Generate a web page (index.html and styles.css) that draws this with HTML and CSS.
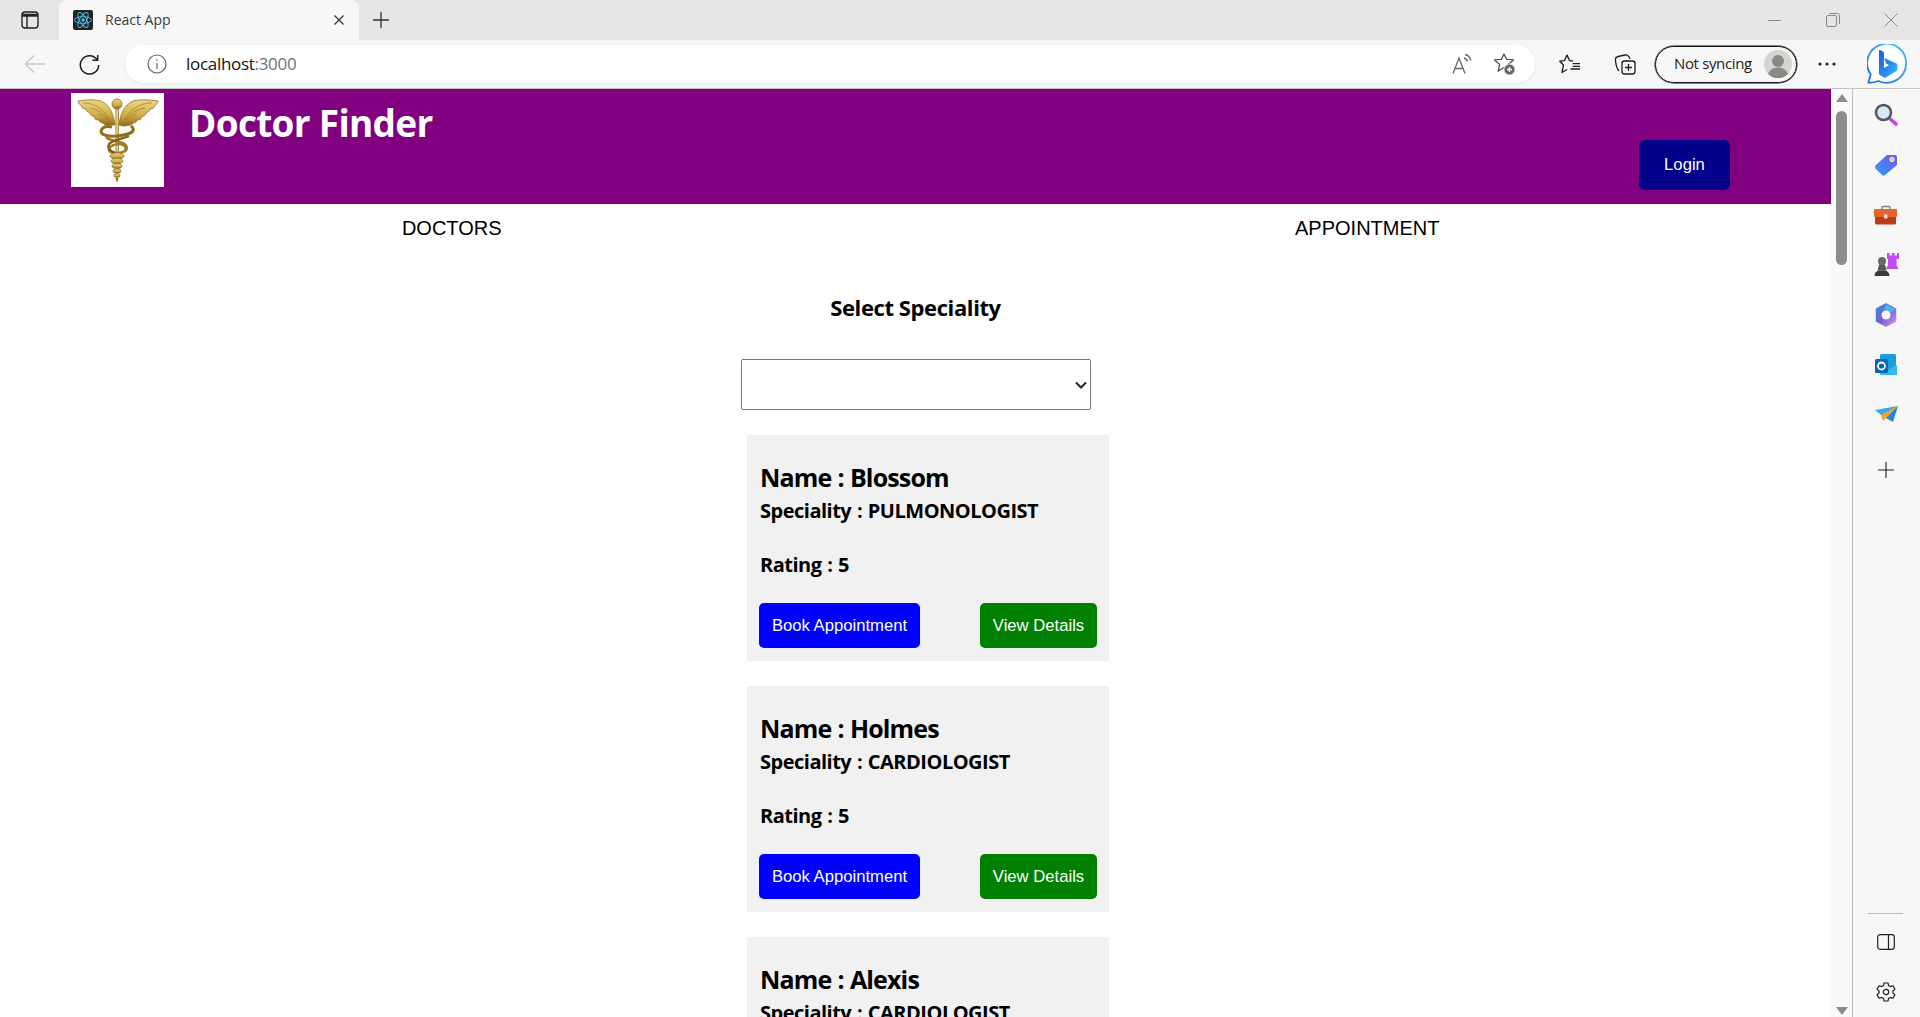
FILE: index.html
```html
<!DOCTYPE html>
<html lang="en">
<head>
  <meta charset="UTF-8">
  <meta name="viewport" content="width=device-width, initial-scale=1.0">
  <title>React App</title>
  <link rel="stylesheet" href="styles.css">
</head>
<body>
  <div class="browser">

    <!-- Tab strip -->
    <div class="tabstrip">
      <div class="strip-btn first">
        <svg width="18" height="18" viewBox="0 0 18 18" fill="none" stroke="#222" stroke-width="1.4"><rect x="1" y="1" width="16" height="16" rx="3"/><path d="M1.5 4.2h15" stroke-width="3"/><path d="M6 5v12"/></svg>
      </div>
      <div class="tab">
        <svg class="tab-icon" width="20" height="20" viewBox="0 0 20 20" fill="none" stroke="#53c1de" stroke-width=".9"><rect width="20" height="20" rx="2" fill="#20232a" stroke="none"/><circle cx="10" cy="10" r="1.7" fill="#53c1de" stroke="none"/><ellipse cx="10" cy="10" rx="8.5" ry="3.4"/><ellipse cx="10" cy="10" rx="8.5" ry="3.4" transform="rotate(60 10 10)"/><ellipse cx="10" cy="10" rx="8.5" ry="3.4" transform="rotate(120 10 10)"/></svg>
        <span class="tab-title">React App</span>
        <svg class="tab-close" width="12" height="12" viewBox="0 0 12 12" stroke="#333" stroke-width="1.2"><path d="M1.5 1.5l9 9M10.5 1.5l-9 9"/></svg>
      </div>
      <div class="strip-btn new-tab">
        <svg width="18" height="18" viewBox="0 0 18 18" stroke="#333" stroke-width="1.3"><path d="M9 1v16M1 9h16"/></svg>
      </div>
      <div class="window-controls">
        <div class="win-btn"><svg width="14" height="14" viewBox="0 0 14 14" stroke="#8a8a8a"><path d="M0 7.5h13"/></svg></div>
        <div class="win-btn"><svg width="14" height="14" viewBox="0 0 14 14" fill="none" stroke="#8a8a8a"><rect x=".5" y="2.5" width="10" height="11" rx="1.5"/><path d="M3 .5h8.5a2 2 0 0 1 2 2V11"/></svg></div>
        <div class="win-btn"><svg width="14" height="14" viewBox="0 0 14 14" stroke="#8a8a8a"><path d="M.5.5l13 13M13.5.5l-13 13"/></svg></div>
      </div>
    </div>

    <!-- Toolbar -->
    <div class="toolbar">
      <div class="tool-btn">
        <svg width="22" height="20" viewBox="0 0 22 20" fill="none" stroke="#c9c9c9" stroke-width="1.4"><path d="M21 10H1.5M10 1.5L1.5 10l8.5 8.5"/></svg>
      </div>
      <div class="tool-btn">
        <svg width="21" height="21" viewBox="0 0 21 21" fill="none" stroke="#1c1c1c" stroke-width="1.5"><path d="M18 5.5A9.2 9.2 0 1 0 19.7 11"/><path d="M18.7 1v5.2h-5.2"/></svg>
      </div>
      <div class="addressbar">
        <svg class="info-icon" width="20" height="20" viewBox="0 0 20 20" fill="none" stroke="#666" stroke-width="1.2"><circle cx="10" cy="10" r="9"/><path d="M10 9v6M10 5.2v1.6"/></svg>
        <span class="url">localhost<span class="url-port">:3000</span></span>
        <div class="address-actions">
          <svg width="22" height="22" viewBox="0 0 22 22" fill="none" stroke="#666" stroke-width="1.3"><path d="M2 20.500L8 5l6 15.500M4 15.500h8"/><path d="M13 5c1.800.3 3 1.500 3.500 3.500M14 1.500c3 .6 5 2.500 5.800 6"/></svg>
          <svg width="24" height="24" viewBox="0 0 24 24" fill="none" stroke="#555" stroke-width="1.300" stroke-linejoin="round"><path d="M12 2l2.600 5.400 6.900.5-5.200 4.500 1.600 6.700L12 15.500l-5.900 3.600 1.600-6.700-5.200-4.500 6.900-.5z"/><circle cx="17.500" cy="17.500" r="5.500" fill="#666" stroke="#fff" stroke-width=".8"/><path d="M17.500 15v5M15 17.500h5" stroke="#fff" stroke-width="1.400"/></svg>
        </div>
      </div>
      <div class="tool-btn toolbar-gap">
        <svg width="22" height="20" viewBox="0 0 22 20" fill="none" stroke="#1c1c1c" stroke-width="1.300" stroke-linejoin="round"><path d="M14 7l-3.500-.4L8 1 5.500 6.600.8 7.200l3.700 3.800L3 18.500l5-3"/><path d="M13.700 9.700H21M13.700 12.400H21M11.500 15H21"/></svg>
      </div>
      <div class="tool-btn">
        <svg width="22" height="22" viewBox="0 0 22 22" fill="none" stroke="#1c1c1c" stroke-width="1.300"><rect x="8" y="8" width="13" height="13" rx="2.500"/><path d="M14.500 11v7M11 14.500h7"/><path d="M5 18C3 16 2 12 1.500 8 1 5 2 4 4 3.500L11 2c3-.5 4 1 5 4"/></svg>
      </div>
      <div class="sync-pill">
        <span class="sync-text">Not syncing</span>
        <svg width="28" height="28" viewBox="0 0 28 28"><circle cx="14" cy="14" r="14" fill="#d6d4d0"/><circle cx="14" cy="11" r="6" fill="#8b8985"/><path d="M4 24c2-5 6-6.500 10-6.500S22 19 24 24a14 14 0 0 1-20 0z" fill="#8b8985"/></svg>
      </div>
      <div class="tool-btn more-btn">
        <svg width="18" height="4" viewBox="0 0 18 4" fill="#222"><circle cx="2" cy="2" r="1.600"/><circle cx="9" cy="2" r="1.600"/><circle cx="16" cy="2" r="1.600"/></svg>
      </div>
      <div class="bing-btn">
        <svg width="42" height="40" viewBox="0 0 42 40" fill="none">
          <defs>
            <linearGradient id="bingB" x1="0" y1="0" x2="1" y2="1"><stop offset="0" stop-color="#1a5fe0"/><stop offset=".6" stop-color="#2a8df0"/><stop offset="1" stop-color="#37c6ea"/></linearGradient>
            <linearGradient id="bingRing" x1="0" y1="1" x2="1" y2="0"><stop offset="0" stop-color="#1a6fe8"/><stop offset="1" stop-color="#3ac0f5"/></linearGradient>
          </defs>
          <path d="M1.500 38.500l2.200-8A19.500 19.500 0 1 1 11.500 37c-3 1-7 2-10 1.500z" stroke="url(#bingRing)" stroke-width="1.800" fill="#fff"/>
          <path d="M12 6c2 0 4 1 5 2.500v15.500l5-2.800-3-1.700-1.700-5.500 13 6v6.500L18 34l-6-3.500z" fill="url(#bingB)"/>
        </svg>
      </div>
    </div>

    <div class="viewport">
      <!-- The page -->
      <div class="page">
        <header class="site-header">
          <div class="logo">
            <svg width="93" height="94" viewBox="0 0 93 94">
              <defs>
                <linearGradient id="gold" x1="0" y1="0" x2="0" y2="1"><stop offset="0" stop-color="#ecd886"/><stop offset=".6" stop-color="#d2ac48"/><stop offset="1" stop-color="#8a6a1c"/></linearGradient>
                <linearGradient id="goldStaff" x1="0" y1="0" x2="1" y2="0"><stop offset="0" stop-color="#a07c24"/><stop offset=".5" stop-color="#f1e29a"/><stop offset="1" stop-color="#8a6a1c"/></linearGradient>
              </defs>
              <!-- wings -->
              <path d="M44 32c-1-10-5-20-14-24C22 6 14 7 7 8c0 2 2 4 4 5-1 1 1 3 4 3 0 2 2 3 4 4 0 2 2 3 5 4-1 2 1 3 4 3 0 2 2 3 4 3 1 2 4 3 8 2z" fill="url(#gold)" stroke="#94741f" stroke-width=".8"/>
              <path d="M48 32c1-10 5-20 14-24 8-2 17-1 25 0 0 2-2 4-4 5 1 1-1 3-4 3 0 2-2 3-4 4 0 2-2 3-5 4 1 2-1 3-4 3 0 2-2 3-4 3-1 2-4 3-10 3z" fill="url(#gold)" stroke="#94741f" stroke-width=".8"/>
              <path d="M12 10c10 0 20 4 27 18M19 15c8 1 15 6 20 14M27 21c5 1 9 5 12 9M81 10c-10 0-21 4-28 18M74 15c-8 1-16 6-21 14M66 21c-5 1-9 5-13 9" fill="none" stroke="#a5842c" stroke-width=".8"/>
              <!-- staff -->
              <rect x="44.500" y="14" width="3.500" height="48" fill="url(#goldStaff)"/>
              <circle cx="46" cy="11" r="5" fill="url(#gold)" stroke="#8a6a1c" stroke-width=".8"/>
              <!-- snakes -->
              <path d="M60 33c5 4 3 8-14 10-14 1-18-3-15-7 2-3 7-3 10-2" fill="none" stroke="#8f6e1c" stroke-width="3"/>
              <path d="M35 44c4 4 11 4 17 6 5 3 5 7 0 9-6 2-13 1-14-2-1-4 7-6 10-6 6 0 8 4 6 8" fill="none" stroke="#a27f24" stroke-width="2.600"/>
              <path d="M58 43c-6 3-15 3-20 8-2 4 1 7 6 9" fill="none" stroke="#7e5f16" stroke-width="2.200"/>
              <ellipse cx="46" cy="63" rx="7" ry="3.200" fill="url(#gold)" stroke="#7a5c16" stroke-width=".6"/>
              <ellipse cx="46" cy="68" rx="6" ry="2.800" fill="url(#gold)" stroke="#7a5c16" stroke-width=".6"/>
              <ellipse cx="46" cy="73" rx="5" ry="2.500" fill="url(#gold)" stroke="#7a5c16" stroke-width=".6"/>
              <ellipse cx="46" cy="78" rx="4" ry="2.200" fill="url(#gold)" stroke="#7a5c16" stroke-width=".6"/>
              <ellipse cx="46" cy="82.500" rx="3" ry="1.900" fill="url(#gold)" stroke="#7a5c16" stroke-width=".6"/>
              <path d="M44.500 85h3L46 90z" fill="#8a6a1c"/>
            </svg>
          </div>
          <h1 class="site-title">Doctor Finder</h1>
          <button class="login-btn">Login</button>
        </header>

        <nav class="site-nav">
          <a class="nav-link">DOCTORS</a>
          <a class="nav-link">APPOINTMENT</a>
        </nav>

        <h3 class="select-title">Select Speciality</h3>
        <div class="select-row">
          <div class="select-wrap">
            <select class="speciality-select"><option></option></select>
            <svg class="select-arrow" width="12" height="8" viewBox="0 0 12 8" fill="none" stroke="#222" stroke-width="2"><path d="M1 1.500l5 5 5-5"/></svg>
          </div>
        </div>

        <div class="doctor-list">
          <div class="doctor-card">
            <h2 class="doctor-name">Name : Blossom</h2>
            <p class="doctor-line">Speciality : PULMONOLOGIST</p>
            <p class="doctor-line rating">Rating : 5</p>
            <div class="card-actions">
              <button class="book-btn">Book Appointment</button>
              <button class="details-btn">View Details</button>
            </div>
          </div>
          <div class="doctor-card">
            <h2 class="doctor-name">Name : Holmes</h2>
            <p class="doctor-line">Speciality : CARDIOLOGIST</p>
            <p class="doctor-line rating">Rating : 5</p>
            <div class="card-actions">
              <button class="book-btn">Book Appointment</button>
              <button class="details-btn">View Details</button>
            </div>
          </div>
          <div class="doctor-card">
            <h2 class="doctor-name">Name : Alexis</h2>
            <p class="doctor-line">Speciality : CARDIOLOGIST</p>
            <p class="doctor-line rating">Rating : 5</p>
            <div class="card-actions">
              <button class="book-btn">Book Appointment</button>
              <button class="details-btn">View Details</button>
            </div>
          </div>
        </div>
      </div>

      <!-- Scrollbar -->
      <div class="scrollbar">
        <div class="scroll-up"></div>
        <div class="scroll-thumb"></div>
        <div class="scroll-down"></div>
      </div>

      <!-- Edge sidebar -->
      <aside class="sidebar">
        <div class="side-icon">
          <svg width="24" height="24" viewBox="0 0 24 24" fill="none"><path d="M15 15l7 6" stroke="#c53fe0" stroke-width="3.500" stroke-linecap="round"/><circle cx="9.500" cy="9.500" r="7.500" fill="#d6e9f5" stroke="#55565a" stroke-width="2.500"/></svg>
        </div>
        <div class="side-icon">
          <svg width="24" height="24" viewBox="0 0 24 24"><defs><linearGradient id="tagG" x1="1" y1="0" x2="0" y2="1"><stop offset="0" stop-color="#6a5cf0"/><stop offset="1" stop-color="#2f9bf5"/></linearGradient></defs><path d="M13 2h8a2 2 0 0 1 2 2v8L11 22a2.500 2.500 0 0 1-3 0l-6.500-6.500a2.500 2.500 0 0 1 0-3z" fill="url(#tagG)"/><circle cx="18" cy="6.500" r="2.200" fill="#f3c440" stroke="#fff" stroke-width=".8"/></svg>
        </div>
        <div class="side-icon">
          <svg width="24" height="24" viewBox="0 0 24 24" fill="none"><path d="M8 7V4.500a1 1 0 0 1 1-1h6a1 1 0 0 1 1 1V7" stroke="#7f7f7f" stroke-width="1.500"/><rect y="6" width="23" height="8" fill="#e8622a" rx="1"/><path d="M1 14h21v6a1.500 1.500 0 0 1-1.500 1.500h-18A1.500 1.500 0 0 1 1 20z" fill="#b83d15"/><rect x="10" y="11.500" width="3.500" height="4" fill="#d8d8d8"/></svg>
        </div>
        <div class="side-icon">
          <svg width="26" height="24" viewBox="0 0 26 24"><path d="M14 0h2.500v2.500H19V0h2.500v2.500H24V0h2v6h-2.500v6l2 4H13l2-4V6h-1z" fill="#c14df0"/><circle cx="9" cy="8" r="4" fill="#6a6a6a"/><path d="M6 11.500h6l1.500 6h-9z" fill="#5a5a5a"/><path d="M1.500 23c0-3 2-5 4-5.500h7c2 .5 4 2.500 4 5.500z" fill="#3a3a3a"/></svg>
        </div>
        <div class="side-icon">
          <svg width="24" height="24" viewBox="0 0 24 24" fill="none"><defs><linearGradient id="m365" x1="0" y1="0" x2="1" y2="1"><stop offset="0" stop-color="#3a8be0"/><stop offset=".5" stop-color="#7a5fd4"/><stop offset="1" stop-color="#c79ae4"/></linearGradient></defs><path d="M12 1l9.500 5v12L12 23l-9.500-5V6z" fill="url(#m365)" stroke="url(#m365)" stroke-width="1.500" stroke-linejoin="round"/><path d="M12 1l9.500 5L17 9.500 10 7z" fill="#45b4e8"/><circle cx="12" cy="12" r="4.500" fill="#f7f7f7"/></svg>
        </div>
        <div class="side-icon">
          <svg width="24" height="24" viewBox="0 0 24 24"><rect x="6" y="1" width="16" height="20" rx="1.500" fill="#1a9ce0"/><path d="M6 12l8 5 9-5v10H6z" fill="#35b8f0"/><rect x="1" y="6" width="13" height="14" rx="1.500" fill="#0a64b8"/><circle cx="7.500" cy="13" r="3.500" fill="none" stroke="#fff" stroke-width="1.800"/></svg>
        </div>
        <div class="side-icon">
          <svg width="24" height="24" viewBox="0 0 24 24"><path d="M1 7l23-4-17 9z" fill="#35a8f0"/><path d="M7 12L24 3 19 19l-7-4z" fill="#2088e0"/><path d="M7 12l17-9-12 12-3 3z" fill="#f2a71c"/></svg>
        </div>
        <div class="side-icon side-add">
          <svg width="16" height="16" viewBox="0 0 16 16" stroke="#222" stroke-width="1.100"><path d="M8 0v16M0 8h16"/></svg>
        </div>
        <div class="sidebar-bottom">
          <div class="side-divider"></div>
          <div class="side-icon">
            <svg width="18" height="16" viewBox="0 0 18 16" fill="none" stroke="#222" stroke-width="1.200"><rect x=".7" y=".7" width="16.600" height="14.600" rx="2.500"/><path d="M11.500 1v14"/></svg>
          </div>
          <div class="side-icon">
            <svg width="20" height="20" viewBox="0 0 20 20" fill="none" stroke="#222" stroke-width="1.200"><path d="M8 1h4l.6 2.600 1.800 1 2.500-.8 2 3.400-2 1.800v2l2 1.800-2 3.400-2.500-.8-1.800 1L12 19H8l-.6-2.600-1.800-1-2.500.8-2-3.400 2-1.800V9L1.100 7.200l2-3.400 2.500.8 1.800-1z"/><circle cx="10" cy="10" r="2.700"/></svg>
          </div>
        </div>
      </aside>
    </div>
  </div>
</body>
</html>
```

FILE: styles.css
```css
/* Reset */
* {
  margin: 0;
  padding: 0;
  box-sizing: border-box;
}

html, body {
  height: 100%;
  overflow: hidden;
}

body {
  font-family: 'Liberation Sans', Arial, sans-serif;
  background-color: #fff;
  color: #000;
}

.browser {
  display: flex;
  flex-direction: column;
  height: 1017px;
}

/* Tab strip */
.tabstrip {
  display: flex;
  align-items: flex-end;
  height: 40px;
  background-color: #e6e6e6;
}

.strip-btn {
  display: flex;
  align-items: center;
  justify-content: center;
  height: 40px;
}

.strip-btn.first {
  width: 59px;
}

.strip-btn.new-tab {
  width: 44px;
}

.tab {
  display: flex;
  align-items: center;
  width: 300px;
  height: 40px;
  padding: 0 14px;
  background-color: #f7f7f7;
  border-radius: 8px 8px 0 0;
}

.tab-title {
  margin: 0 0 2px 12px;
  font-family: 'Open Sans', 'Noto Sans', sans-serif;
  font-size: 14px;
  color: #3a3a3a;
}

.tab-close {
  margin-left: auto;
}

.window-controls {
  display: flex;
  margin-left: auto;
}

.win-btn {
  display: flex;
  align-items: center;
  justify-content: center;
  width: 58px;
  height: 40px;
}

/* Toolbar */
.toolbar {
  display: flex;
  align-items: center;
  height: 49px;
  padding-left: 7px;
  background-color: #f7f7f7;
  border-bottom: 1px solid #c4c4c4;
}

.tool-btn {
  display: flex;
  align-items: center;
  justify-content: center;
  width: 55px;
  height: 38px;
}

.addressbar {
  display: flex;
  align-items: center;
  width: 1410px;
  height: 38px;
  margin-left: 8px;
  padding: 0 19px 0 22px;
  background-color: #fff;
  border-radius: 19px;
  box-shadow: 0 1px 3px rgba(0, 0, 0, 0.08);
}

.url {
  margin: 0 0 2px 19px;
  font-family: 'Open Sans', 'Noto Sans', sans-serif;
  font-size: 17px;
  letter-spacing: -0.3px;
  color: #111;
}

.url-port {
  color: #6b7280;
}

.address-actions {
  display: flex;
  align-items: center;
  gap: 19px;
  margin-left: auto;
}

.toolbar-gap {
  margin-left: 7px;
}

.sync-pill {
  display: flex;
  align-items: center;
  justify-content: space-between;
  width: 142px;
  height: 37px;
  margin-left: 3px;
  padding: 0 4px 0 18px;
  border: 1px solid #111;
  border-radius: 19px;
  box-shadow: 0 0 0 0.5px #111;
}

.sync-text {
  margin-bottom: 2px;
  font-family: 'Open Sans', 'Noto Sans', sans-serif;
  font-size: 15px;
  letter-spacing: -0.35px;
  color: #1c1c1c;
}

.more-btn {
  margin-left: 2px;
}

.bing-btn {
  display: flex;
  align-items: center;
  justify-content: center;
  width: 62px;
  margin-left: 3px;
}

/* Below the toolbar */
.viewport {
  display: flex;
  flex: 1;
  min-height: 0;
}

.page {
  flex: 1;
  min-width: 0;
  overflow: hidden;
}

/* Site header */
.site-header {
  display: flex;
  align-items: flex-start;
  height: 115px;
  padding: 4px 101px 0 71px;
  background-color: #800080;
}

.logo {
  width: 93px;
  height: 94px;
  background-color: #fff;
}

.site-title {
  margin: 5px 0 0 25px;
  font-family: 'Open Sans', 'Noto Sans', sans-serif;
  font-size: 37px;
  font-weight: 700;
  letter-spacing: -0.7px;
  line-height: 50px;
  color: #fff;
}

.login-btn {
  width: 91px;
  height: 50px;
  margin: 47px 0 0 auto;
  background-color: #00008b;
  border: none;
  border-radius: 6px;
  font-family: inherit;
  font-size: 16.67px;
  color: #fff;
}

/* Nav */
.site-nav {
  display: grid;
  grid-template-columns: 1fr 1fr;
  height: 48px;
  align-items: center;
  text-align: center;
}

.nav-link {
  padding-right: 12px;
  font-size: 20px;
  color: #000;
}

/* Select */
.select-title {
  margin-top: 39px;
  font-family: 'Open Sans', 'Noto Sans', sans-serif;
  font-size: 22px;
  font-weight: 700;
  letter-spacing: -0.4px;
  line-height: 32px;
  text-align: center;
}

.select-row {
  display: flex;
  justify-content: center;
  margin-top: 36px;
}

.select-wrap {
  position: relative;
  width: 350px;
  height: 51px;
}

.speciality-select {
  width: 100%;
  height: 100%;
  appearance: none;
  background-color: #fff;
  border: 1px solid #767676;
  border-radius: 2px;
  font-size: 16px;
}

.select-arrow {
  position: absolute;
  top: 22px;
  right: 4px;
}

/* Doctor cards */
.doctor-list {
  display: flex;
  flex-direction: column;
  gap: 25px;
  width: 362px;
  margin: 25px 0 0 747px;
}

.doctor-card {
  height: 226px;
  padding: 24px 12px 0;
  background-color: #f1f1f1;
}

.doctor-name {
  margin-bottom: 2px;
  padding-left: 1px;
  font-family: 'Open Sans', 'Noto Sans', sans-serif;
  font-size: 25px;
  font-weight: 700;
  letter-spacing: -0.85px;
  word-spacing: 0.5px;
  line-height: 36px;
}

.doctor-line {
  padding-left: 1px;
  font-family: 'Open Sans', 'Noto Sans', sans-serif;
  font-size: 20px;
  font-weight: 700;
  letter-spacing: -0.5px;
  word-spacing: 1px;
  line-height: 28px;
}

.doctor-line.rating {
  margin-top: 26px;
}

.card-actions {
  display: flex;
  justify-content: space-between;
  margin-top: 24px;
}

.book-btn, .details-btn {
  height: 45px;
  border: none;
  border-radius: 5px;
  font-family: inherit;
  font-size: 16.67px;
  color: #fff;
}

.book-btn {
  width: 161px;
  background-color: #0000ff;
}

.details-btn {
  width: 117px;
  background-color: #008000;
}

/* Scrollbar */
.scrollbar {
  display: flex;
  flex-direction: column;
  align-items: center;
  width: 22px;
  padding: 5px 0 2px;
  background-color: #fafafa;
  border-right: 1px solid #bdbdbd;
}

.scroll-up {
  border-left: 6px solid transparent;
  border-right: 6px solid transparent;
  border-bottom: 8px solid #8c8c8c;
}

.scroll-thumb {
  width: 11px;
  height: 154px;
  margin-top: 9px;
  background-color: #8c8c8c;
  border-radius: 6px;
}

.scroll-down {
  margin-top: auto;
  border-left: 6px solid transparent;
  border-right: 6px solid transparent;
  border-top: 8px solid #8c8c8c;
}

/* Sidebar */
.sidebar {
  display: flex;
  flex-direction: column;
  align-items: center;
  width: 67px;
  padding: 1px 2px 0 0;
  background-color: #f7f7f7;
}

.side-icon {
  display: flex;
  align-items: center;
  justify-content: center;
  width: 40px;
  height: 50px;
  flex-shrink: 0;
}

.side-add {
  margin-top: 5px;
}

.sidebar-bottom {
  display: flex;
  flex-direction: column;
  align-items: center;
  margin-top: auto;
}

.side-divider {
  width: 35px;
  height: 1px;
  margin-bottom: 3px;
  background-color: #bdbdbd;
}
```
